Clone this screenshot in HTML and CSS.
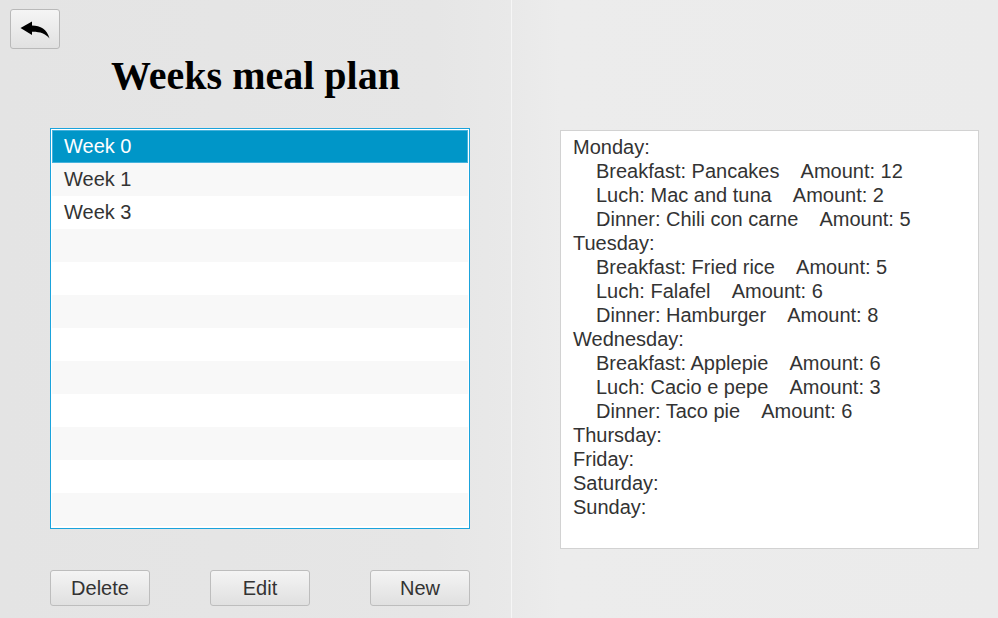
FILE: index.html
```html
<!DOCTYPE html>
<html>
<head>
<meta charset="utf-8">
<link rel="stylesheet" href="styles.css">
</head>
<body>
<div class="app">
  <section class="page page-left">
    <button class="back" aria-label="Back">
      <svg width="30" height="18" viewBox="0 0 30 18"><path d="M0.5 7 L12 0.5 L12 4.6 C20.5 4.8 27 8 29.5 17.5 C25.5 12.5 19.5 10.6 12 10.8 L12 14 Z" fill="#000"/></svg>
    </button>
    <h1 class="title">Weeks meal plan</h1>
    <ul class="list">
      <li class="row selected">Week 0</li>
      <li class="row">Week 1</li>
      <li class="row">Week 3</li>
      <li class="row"></li>
      <li class="row"></li>
      <li class="row"></li>
      <li class="row"></li>
      <li class="row"></li>
      <li class="row"></li>
      <li class="row"></li>
      <li class="row"></li>
      <li class="row"></li>
    </ul>
    <div class="actions">
      <button class="btn">Delete</button>
      <button class="btn">Edit</button>
      <button class="btn">New</button>
    </div>
  </section>
  <section class="page page-right">
    <div class="plan">
      <div class="day">Monday:</div>
      <div class="meal">Breakfast: Pancakes    Amount: 12</div>
      <div class="meal">Luch: Mac and tuna    Amount: 2</div>
      <div class="meal">Dinner: Chili con carne    Amount: 5</div>
      <div class="day">Tuesday:</div>
      <div class="meal">Breakfast: Fried rice    Amount: 5</div>
      <div class="meal">Luch: Falafel    Amount: 6</div>
      <div class="meal">Dinner: Hamburger    Amount: 8</div>
      <div class="day">Wednesday:</div>
      <div class="meal">Breakfast: Applepie    Amount: 6</div>
      <div class="meal">Luch: Cacio e pepe    Amount: 3</div>
      <div class="meal">Dinner: Taco pie    Amount: 6</div>
      <div class="day">Thursday:</div>
      <div class="day">Friday:</div>
      <div class="day">Saturday:</div>
      <div class="day">Sunday:</div>
    </div>
  </section>
</div>
</body>
</html>
```

FILE: styles.css
```css
* { box-sizing: border-box; }
html, body { margin: 0; padding: 0; }
body {
  width: 998px;
  height: 618px;
  overflow: hidden;
  font-family: "Liberation Sans", Arial, sans-serif;
  color: #333;
  background: #ebebeb;
}
.app {
  display: flex;
  height: 618px;
}
.page-left {
  width: 512px;
  height: 618px;
  padding-top: 9px;
  background: linear-gradient(90deg, #e4e4e4 0%, #e6e6e6 85%, #e9e9e9 100%);
  border-right: 1px solid #f6f6f6;
  display: flex;
  flex-direction: column;
}
.page-right {
  flex: 1;
  background: linear-gradient(90deg, #e9e9e9 0%, #ececec 10%, #ebebeb 100%);
  padding: 130px 0 0 48px;
}
.back {
  margin-left: 10px;
  width: 50px;
  height: 40px;
  padding: 0;
  border: 1px solid #b9b9b9;
  border-radius: 3px;
  background: linear-gradient(#f5f5f5, #e1e1e1);
  display: flex;
  align-items: center;
  justify-content: center;
}
.back svg { display: block; margin: 2px 0 0 0; }
.title {
  margin: 5px 0 30px 0;
  text-align: center;
  font-family: "Liberation Serif", "Times New Roman", serif;
  font-weight: bold;
  font-size: 40px;
  line-height: 44px;
  color: #000;
}
.list {
  list-style: none;
  margin: 0 0 0 50px;
  padding: 1px;
  width: 420px;
  height: 401px;
  border: 1px solid #1aa3dc;
  background: #fff;
  overflow: hidden;
}
.row {
  height: 33px;
  line-height: 33px;
  padding-left: 12px;
  font-size: 20px;
  color: #333;
  background: #fff;
}
.row:nth-child(even) { background: #f8f8f8; }
.row.selected {
  background: #0096c8;
  color: #fff;
  box-shadow: inset 0 0 0 1px #45b2dc;
}
.actions {
  margin: 41px 0 0 50px;
  width: 420px;
  display: flex;
  justify-content: space-between;
}
.btn {
  width: 100px;
  height: 36px;
  padding: 0;
  border: 1px solid #bdbdbd;
  border-radius: 3px;
  background: linear-gradient(#f4f4f4, #e0e0e0);
  font-family: "Liberation Sans", Arial, sans-serif;
  font-size: 20px;
  color: #333;
}
.plan {
  width: 419px;
  height: 419px;
  background: #fff;
  border: 1px solid #d2d2d2;
  padding: 4px 0 0 12px;
  font-size: 20px;
  line-height: 24px;
  color: #333;
}
.day, .meal { white-space: pre; }
.meal { padding-left: 23px; }
```
